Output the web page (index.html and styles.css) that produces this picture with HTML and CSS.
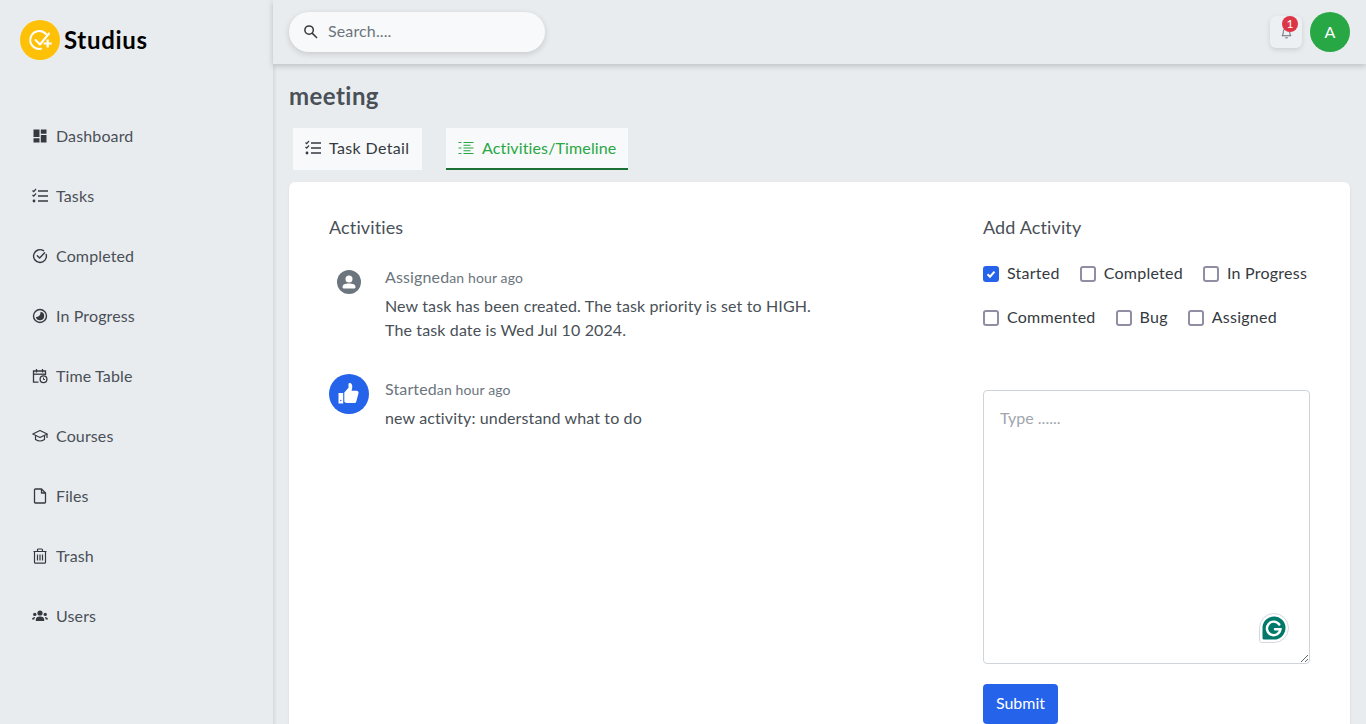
FILE: index.html
```html
<!DOCTYPE html>
<html lang="en">
<head>
    <meta charset="UTF-8">
    <meta name="viewport" content="width=device-width, initial-scale=1.0">
    <title>Studius</title>
    <link rel="stylesheet" href="styles.css">
</head>
<body>
<div class="app">
    <aside class="sidebar">
        <div class="brand">
            <span class="brand-logo">
                <svg viewBox="0 0 40 40" width="40" height="40" fill="none" stroke="#fff" stroke-width="2" stroke-linecap="round" stroke-linejoin="round">
                    <path d="M26 14A9 9 0 1 0 21 28.800"/>
                    <path d="M15.500 20l4.500 4.500L29 13.500"/>
                    <path d="M27.700 19.500v8M23.700 23.500h8" stroke-width="2.200" stroke-linecap="butt"/>
                </svg>
            </span>
            <span class="brand-name">Studius</span>
        </div>
        <ul class="nav">
            <li class="nav-item">
                <svg class="nav-icon" viewBox="0 0 16 16"><path fill="#343a40" d="M1.500 1.500h6v7.500h-6zM8.800 1.500h5.700v4.200H8.800zM8.800 7h5.700v7.500H8.800zM1.500 10.300h6v4.200h-6z"/></svg>
                Dashboard
            </li>
            <li class="nav-item">
                <svg class="nav-icon" viewBox="0 0 16 16"><use href="#icon-tasks"/></svg>
                Tasks
            </li>
            <li class="nav-item">
                <svg class="nav-icon" viewBox="0 0 16 16" fill="none" stroke="#343a40" stroke-width="1.400" stroke-linecap="round" stroke-linejoin="round"><path d="M14.200 6.500A6.400 6.400 0 1 1 11.500 2.700"/><path d="M5.300 7.800l2.300 2.300 5-5.300"/></svg>
                Completed
            </li>
            <li class="nav-item">
                <svg class="nav-icon" viewBox="0 0 16 16"><circle cx="8" cy="8" r="6.500" fill="none" stroke="#343a40" stroke-width="1.400"/><path fill="#343a40" d="M8.500 3.800a4.200 4.200 0 1 1-4.600 5.100C6.500 9.400 8.800 7 8.500 3.800z"/></svg>
                In Progress
            </li>
            <li class="nav-item">
                <svg class="nav-icon" viewBox="0 0 16 16" fill="none" stroke="#343a40" stroke-width="1.300"><path d="M6.500 14.200H1.500V3h12v4"/><path d="M4.500 1v3.500M10.500 1v3.500"/><path d="M1.500 6.200h12"/><circle cx="11.500" cy="11.300" r="3.400"/><path d="M11.500 9.500v2h1.500" stroke-width="1"/></svg>
                Time Table
            </li>
            <li class="nav-item">
                <svg class="nav-icon" viewBox="0 0 16 16" fill="none" stroke="#343a40" stroke-width="1.200" stroke-linejoin="round"><path d="M8 2.500L.8 6 8 9.500 15.200 6z"/><path d="M3.500 7.500v4c1.500 1 3 1.500 4.500 1.500s3-.5 4.500-1.500v-4"/><path d="M15 6v4"/></svg>
                Courses
            </li>
            <li class="nav-item">
                <svg class="nav-icon" viewBox="0 0 16 16" fill="none" stroke="#343a40" stroke-width="1.300" stroke-linejoin="round"><path d="M2.500 1.800A.8.800 0 0 1 3.300 1h6.200l4 4v9.200a.8.800 0 0 1-.8.800H3.300a.8.800 0 0 1-.8-.8z"/><path d="M9.500 1v4h4"/></svg>
                Files
            </li>
            <li class="nav-item">
                <svg class="nav-icon" viewBox="0 0 16 16" fill="none" stroke="#343a40" stroke-width="1.200" stroke-linejoin="round"><path d="M1.500 3.500h13M5.500 3.500V2a1 1 0 0 1 1-1h3a1 1 0 0 1 1 1v1.500"/><path d="M2.500 3.500v10.700a1 1 0 0 0 1 1h9a1 1 0 0 0 1-1V3.500"/><path d="M5.500 6.500v6M8 6.500v6M10.500 6.500v6"/></svg>
                Trash
            </li>
            <li class="nav-item">
                <svg class="nav-icon" viewBox="0 0 16 16" fill="#343a40"><circle cx="8" cy="5" r="2.600"/><circle cx="2.800" cy="6.400" r="1.700"/><circle cx="13.200" cy="6.400" r="1.700"/><path d="M3.800 13v-1.500C3.800 9.500 5.500 8.500 8 8.500s4.200 1 4.200 3V13zM0 11.500c0-1.500 1-2.600 3.200-2.600-.6.700-.8 1.500-.8 2.600zM16 11.500c0-1.500-1-2.600-3.200-2.600.6.700.8 1.500.8 2.600z"/></svg>
                Users
            </li>
        </ul>
    </aside>

    <div class="main">
        <header class="topbar">
            <div class="search">
                <svg class="search-icon" viewBox="0 0 16 16" fill="none" stroke="#343a40" stroke-width="1.600" stroke-linecap="round"><circle cx="6.500" cy="6.500" r="4.500"/><path d="M10 10l4.500 4.500"/></svg>
                <input class="search-input" type="text" placeholder="Search....">
            </div>
            <div class="top-actions">
                <div class="bell">
                    <svg viewBox="0 0 16 16" width="13" height="13" fill="none" stroke="#495057" stroke-width="1"><path d="M2.500 12c1.200-1.200 1.500-2.500 1.500-5a4 4 0 0 1 8 0c0 2.500.3 3.800 1.500 5z"/><path d="M6.500 14.500h3"/></svg>
                    <span class="badge">1</span>
                </div>
                <div class="avatar">A</div>
            </div>
        </header>

        <main class="content">
            <h1 class="page-title">meeting</h1>
            <div class="tabs">
                <div class="tab tab-detail">
                    <svg class="tab-icon" viewBox="0 0 16 16"><use href="#icon-tasks"/></svg>
                    Task Detail
                </div>
                <div class="tab tab-active">
                    <svg class="tab-icon" viewBox="0 0 16 16" fill="none" stroke="#28a745" stroke-width="1.100"><path d="M.5 2.500h3M5.500 2.500h10M5.500 5.300h7M.5 8h3M5.500 8h10M5.500 10.700h7M.5 13.500h3M5.500 13.500h10"/></svg>
                    Activities/Timeline
                </div>
            </div>

            <section class="card">
                <div class="activities">
                    <h2 class="card-heading">Activities</h2>
                    <div class="timeline">
                        <div class="event">
                            <div class="event-mark">
                                <svg viewBox="0 0 24 24" width="24" height="24"><circle cx="12" cy="12" r="12" fill="#6c757d"/><circle cx="12" cy="9" r="3.500" fill="#fff"/><path fill="#fff" d="M5.500 17c0-2.500 2.500-3.500 6.500-3.500s6.500 1 6.500 3.500c0 1-.8 1.500-1.500 1.500H7c-.7 0-1.500-.5-1.500-1.500z"/></svg>
                            </div>
                            <div class="event-body">
                                <div class="event-head">Assigned<small class="event-time">an hour ago</small></div>
                                <p class="event-text">New task has been created. The task priority is set to HIGH.<br>The task date is Wed Jul 10 2024.</p>
                            </div>
                        </div>
                        <div class="event">
                            <div class="event-mark">
                                <span class="event-circle">
                                    <svg viewBox="0 0 24 24" width="24" height="24" fill="#fff"><path d="M1.500 11h4.700v10.500H1.500z"/><path d="M7.300 20.300V10.500l4.200-4.800V2.300c0-.9.600-1.300 1.300-1.300 1.500 0 2.500 1.700 2.500 3.500 0 1.400-.4 3-.8 4.200h5c1.300 0 2 .8 2 2 0 .5-.1 1-.2 1.400l-2 7.300c-.3 1-1.100 1.600-2 1.600h-7.500c-1.100 0-2.500-.7-2.500-1.700z"/><circle cx="3.800" cy="18.500" r=".7" fill="#2563eb"/></svg>
                                </span>
                            </div>
                            <div class="event-body">
                                <div class="event-head">Started<small class="event-time">an hour ago</small></div>
                                <p class="event-text">new activity: understand what to do</p>
                            </div>
                        </div>
                    </div>
                </div>

                <form class="add-activity">
                    <h2 class="card-heading">Add Activity</h2>
                    <div class="checks">
                        <label class="check"><input type="checkbox" checked>Started</label>
                        <label class="check"><input type="checkbox">Completed</label>
                        <label class="check"><input type="checkbox">In Progress</label>
                        <label class="check"><input type="checkbox">Commented</label>
                        <label class="check"><input type="checkbox">Bug</label>
                        <label class="check"><input type="checkbox">Assigned</label>
                    </div>
                    <div class="text-wrap">
                        <textarea class="text-input" placeholder="Type ......"></textarea>
                        <span class="grammarly">
                            <svg viewBox="0 0 30 30" width="30" height="30"><path fill="#fff" stroke="#d5d8e0" d="M15 .5A14.500 14.500 0 0 1 15 29.500H3A2.500 2.500 0 0 1 .5 27V15A14.500 14.500 0 0 1 15 .5z"/><path fill="#00796b" d="M15 3.500A11.500 11.500 0 0 1 15 26.500H5A1.500 1.500 0 0 1 3.500 25V15A11.500 11.500 0 0 1 15 3.500z"/><path fill="none" stroke="#fff" stroke-width="2.400" stroke-linecap="round" d="M20.300 11.500A6.800 6.800 0 1 0 21.500 16.200H16"/></svg>
                        </span>
                    </div>
                    <button class="submit" type="button">Submit</button>
                </form>
            </section>
        </main>
    </div>
</div>

<svg class="defs" width="0" height="0">
    <symbol id="icon-tasks" viewBox="0 0 16 16">
        <path fill="none" stroke="#343a40" stroke-width="1.700" d="M6 3h10M6 8h10M6 13h10"/>
        <path fill="none" stroke="#343a40" stroke-width="1.200" d="M.5 2.500l1.200 1.200L4 1M.5 7l1.200 1.200L4 5.500"/>
        <circle cx="2" cy="13" r="1.400" fill="#343a40"/>
    </symbol>
</svg>
</body>
</html>
```

FILE: styles.css
```css
*{
    margin: 0;
    padding: 0;
    box-sizing: border-box;
}
html,body{
    width: 100%;
    height: 100%;
    overflow: hidden;
}
body{
    font-family: "Lato", "Noto Sans", sans-serif;
    font-size: 16px;
    line-height: 24px;
    letter-spacing: .13px;
    color: #343a40;
    background: #e9ecef;
}
.defs{
    position: absolute;
}
.app{
    display: flex;
    height: 100%;
}

/* sidebar */
.sidebar{
    width: 273px;
    flex-shrink: 0;
    background: #e9ecef;
    padding: 20px 20px 0;
}
.brand{
    display: flex;
    align-items: center;
    gap: 4px;
    height: 40px;
}
.brand-logo{
    width: 40px;
    height: 40px;
    border-radius: 50%;
    background: #ffc107;
}
.brand-logo svg{
    display: block;
}
.brand-name{
    font-size: 24px;
    font-weight: 700;
    letter-spacing: .7px;
    color: #000;
}
.nav{
    list-style: none;
    margin-top: 46px;
}
.nav-item{
    height: 60px;
    display: flex;
    align-items: center;
    gap: 8px;
    padding-left: 12px;
    padding-bottom: 1px;
    color: #495057;
}
.nav-icon{
    width: 16px;
    height: 16px;
    flex-shrink: 0;
}

/* top bar */
.main{
    flex: 1;
    min-width: 0;
    display: flex;
    flex-direction: column;
}
.topbar{
    position: relative;
    height: 64px;
    flex-shrink: 0;
    display: flex;
    align-items: center;
    justify-content: space-between;
    padding: 0 16px;
    background: #e9ecef;
    box-shadow: 0 2px 6px rgba(0,0,0,.2);
}
.search{
    width: 256px;
    height: 40px;
    display: flex;
    align-items: center;
    gap: 10px;
    padding-left: 14px;
    padding-bottom: 2px;
    background: #f8f9fa;
    border-radius: 20px;
    box-shadow: 0 2px 6px rgba(0,0,0,.15);
}
.search-icon{
    width: 15px;
    height: 15px;
    flex-shrink: 0;
}
.search-input{
    flex: 1;
    min-width: 0;
    border: 0;
    outline: 0;
    background: transparent;
    font: inherit;
    letter-spacing: inherit;
    color: #495057;
}
.search-input::placeholder{
    color: #6c757d;
}
.top-actions{
    display: flex;
    align-items: center;
    gap: 8px;
}
.bell{
    position: relative;
    width: 32px;
    height: 32px;
    display: flex;
    align-items: center;
    justify-content: center;
    border-radius: 6px;
    background: #edf0f2;
    box-shadow: 0 2px 5px rgba(0,0,0,.12);
}
.badge{
    position: absolute;
    top: 0;
    right: 4px;
    width: 16px;
    height: 16px;
    border-radius: 50%;
    background: #dc3545;
    color: #fff;
    font-size: 12px;
    line-height: 16px;
    text-align: center;
}
.avatar{
    width: 40px;
    height: 40px;
    border-radius: 50%;
    background: #28a745;
    color: #fff;
    line-height: 39px;
    text-align: center;
}

/* content */
.content{
    flex: 1;
    padding: 16px 16px 0;
    box-shadow: inset 4px 0 3px -2px rgba(0,0,0,.08);
}
.page-title{
    font-size: 24px;
    line-height: 32px;
    font-weight: 700;
    letter-spacing: .45px;
    color: #495057;
}
.tabs{
    display: flex;
    gap: 24px;
    margin-top: 16px;
    padding-left: 4px;
}
.tab{
    height: 42px;
    display: flex;
    align-items: center;
    gap: 8px;
    padding: 0 12px 2px;
    background: #f8f9fa;
    color: #343a40;
}
.tab-detail{
    width: 129px;
    letter-spacing: .35px;
}
.tab-active{
    color: #28a745;
    border-bottom: 2px solid #1e6f33;
    padding-bottom: 1px;
}
.tab-icon{
    width: 16px;
    height: 16px;
}
.card{
    display: flex;
    justify-content: space-between;
    margin-top: 12px;
    padding: 31px 40px 0;
    min-height: 600px;
    background: #fff;
    border-radius: 6px;
    box-shadow: 0 1px 3px rgba(0,0,0,.08);
}
.card-heading{
    font-size: 18px;
    line-height: 28px;
    font-weight: 400;
    color: #495057;
}
.activities{
    width: 560px;
}
.timeline{
    margin-top: 21px;
}
.event{
    display: flex;
    gap: 16px;
    margin-bottom: 32px;
}
.event-mark{
    width: 40px;
    height: 40px;
    flex-shrink: 0;
    display: flex;
    align-items: center;
    justify-content: center;
}
.event-mark svg{
    display: block;
}
.event-circle{
    width: 40px;
    height: 40px;
    display: flex;
    align-items: center;
    justify-content: center;
    border-radius: 50%;
    background: #2563eb;
}
.event-body{
    padding-top: 5px;
}
.event-head{
    height: 20px;
    color: #6c757d;
    line-height: 20px;
}
.event-time{
    font-size: 14px;
}
.event-text{
    margin-top: 7px;
    color: #495057;
}

/* add activity form */
.add-activity{
    width: 327px;
}
.checks{
    display: flex;
    flex-wrap: wrap;
    gap: 20px;
    margin-top: 21px;
}
.check{
    height: 24px;
    display: flex;
    align-items: flex-start;
    gap: 8px;
    line-height: 22px;
    letter-spacing: .25px;
    color: #343a40;
}
.check input{
    appearance: none;
    width: 16px;
    height: 16px;
    margin-top: 4px;
    border: 2px solid #8f8ea3;
    border-radius: 3px;
    background: #fff;
    flex-shrink: 0;
}
.check input:checked{
    border-color: #2563eb;
    background: #2563eb url("data:image/svg+xml,%3Csvg xmlns='http://www.w3.org/2000/svg' viewBox='0 0 12 12'%3E%3Cpath d='M2.500 6.200l2.500 2.500 4.500-5' fill='none' stroke='%23fff' stroke-width='2'/%3E%3C/svg%3E") center/contain no-repeat;
}
.text-wrap{
    position: relative;
    margin-top: 60px;
}
.text-input{
    display: block;
    width: 100%;
    height: 274px;
    padding: 15px 16px;
    border: 1px solid #ced4da;
    border-radius: 4px;
    outline: 0;
    font: inherit;
    color: #495057;
}
.text-input::placeholder{
    color: #a0a6ac;
}
.grammarly{
    position: absolute;
    right: 21px;
    bottom: 21px;
    width: 30px;
    height: 30px;
}
.submit{
    display: block;
    width: 75px;
    height: 40px;
    margin-top: 20px;
    padding-bottom: 2px;
    border: 0;
    border-radius: 4px;
    background: #2563eb;
    color: #fff;
    font: inherit;
}
```
